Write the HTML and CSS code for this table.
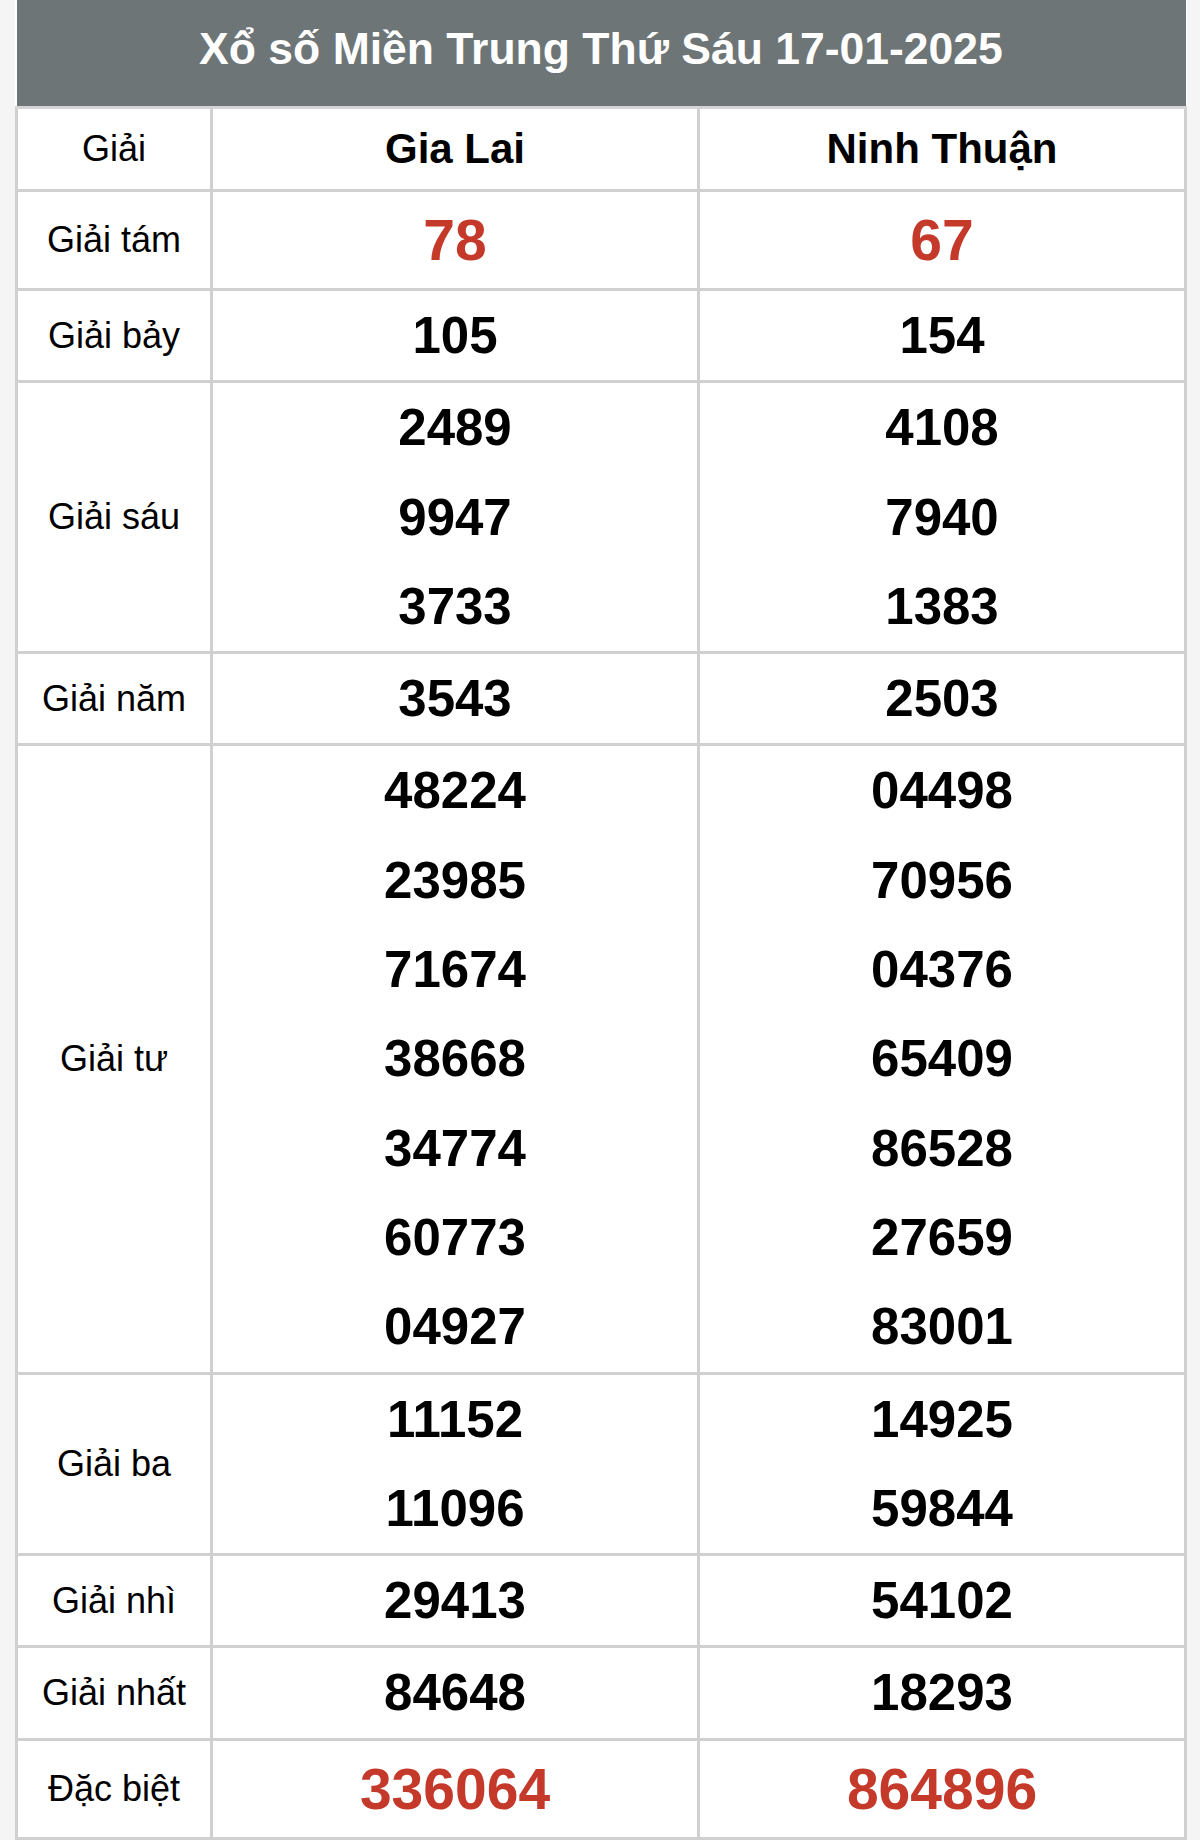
FILE: index.html
```html
<!DOCTYPE html>
<html lang="vi">
<head>
<meta charset="utf-8">
<title>Xổ số Miền Trung Thứ Sáu 17-01-2025</title>
<link rel="stylesheet" href="styles.css">
</head>
<body>
<div class="wrap">
  <table class="kq">
    <colgroup>
      <col class="c-label">
      <col class="c-prov">
      <col class="c-prov">
    </colgroup>
    <thead>
      <tr><th class="title" colspan="3">Xổ số Miền Trung Thứ Sáu 17-01-2025</th></tr>
      <tr class="head">
        <td class="label">Giải</td>
        <td class="prov">Gia Lai</td>
        <td class="prov">Ninh Thuận</td>
      </tr>
    </thead>
    <tbody>
      <tr class="big">
        <td class="label">Giải tám</td>
        <td class="num red">78</td>
        <td class="num red">67</td>
      </tr>
      <tr>
        <td class="label">Giải bảy</td>
        <td class="num"><div>105</div></td>
        <td class="num"><div>154</div></td>
      </tr>
      <tr>
        <td class="label">Giải sáu</td>
        <td class="num"><div>2489</div><div>9947</div><div>3733</div></td>
        <td class="num"><div>4108</div><div>7940</div><div>1383</div></td>
      </tr>
      <tr>
        <td class="label">Giải năm</td>
        <td class="num"><div>3543</div></td>
        <td class="num"><div>2503</div></td>
      </tr>
      <tr>
        <td class="label">Giải tư</td>
        <td class="num"><div>48224</div><div>23985</div><div>71674</div><div>38668</div><div>34774</div><div>60773</div><div>04927</div></td>
        <td class="num"><div>04498</div><div>70956</div><div>04376</div><div>65409</div><div>86528</div><div>27659</div><div>83001</div></td>
      </tr>
      <tr>
        <td class="label">Giải ba</td>
        <td class="num"><div>11152</div><div>11096</div></td>
        <td class="num"><div>14925</div><div>59844</div></td>
      </tr>
      <tr>
        <td class="label">Giải nhì</td>
        <td class="num"><div>29413</div></td>
        <td class="num"><div>54102</div></td>
      </tr>
      <tr>
        <td class="label">Giải nhất</td>
        <td class="num"><div>84648</div></td>
        <td class="num"><div>18293</div></td>
      </tr>
      <tr class="big">
        <td class="label">Đặc biệt</td>
        <td class="num red">336064</td>
        <td class="num red">864896</td>
      </tr>
    </tbody>
  </table>
</div>
</body>
</html>
```
FILE: styles.css
```css
html, body {
  margin: 0;
  padding: 0;
}
body {
  background: #f5f5f5;
  font-family: "Liberation Sans", Arial, Helvetica, sans-serif;
  color: #000;
}
.wrap {
  width: 1170px;
  margin-left: 15px;
}
.kq {
  width: 1170px;
  border-collapse: collapse;
  table-layout: fixed;
  background: #fff;
}
.c-label { width: 195px; }
.c-prov { width: 487px; }

.title {
  background: #6d7577;
  color: #fff;
  font-size: 44.5px;
  font-weight: bold;
  height: 98px;
  line-height: 90px;
  padding: 0 0 8px;
  text-align: center;
  border: none;
  border-bottom: 3px solid #d4d4d4;
}
.kq td {
  border: 3px solid #d0d0d0;
  text-align: center;
  vertical-align: middle;
  padding: 0;
}
.head td {
  height: 80px;
  line-height: 80px;
}
.head .prov {
  font-size: 42px;
  font-weight: bold;
}
.label {
  font-size: 36px;
}
.num {
  font-size: 51px;
  font-weight: bold;
}
.num div {
  line-height: 89.3px;
}
.big td {
  height: 96px;
  line-height: 96px;
}
.num.red {
  color: #c5392b;
  font-size: 57px;
}
```
